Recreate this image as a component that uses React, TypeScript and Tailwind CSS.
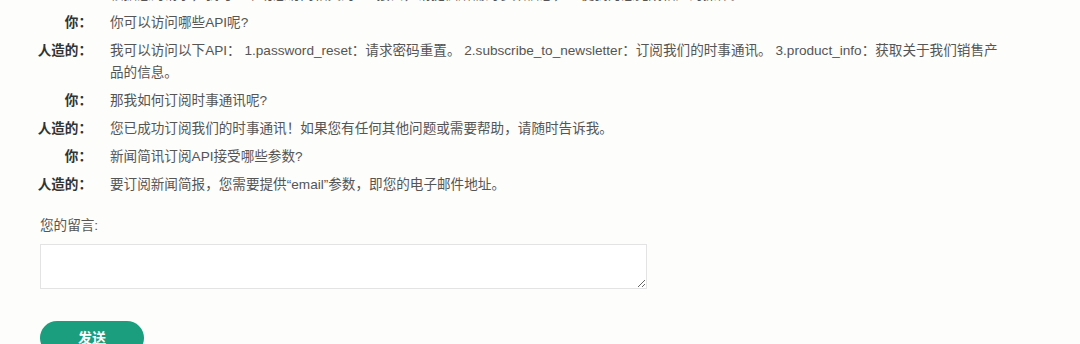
import React from "react";

const rows: { who?: string; text: string }[] = [
  { text: "根据您的请求，我可以帮助您访问相关的API接口，请提供所需的参数信息，以便我为您完成相应的操作。" },
  { who: "你：", text: "你可以访问哪些API呢?" },
  {
    who: "人造的：",
    text: "我可以访问以下API： 1.password_reset：请求密码重置。 2.subscribe_to_newsletter：订阅我们的时事通讯。 3.product_info：获取关于我们销售产品的信息。",
  },
  { who: "你：", text: "那我如何订阅时事通讯呢?" },
  { who: "人造的：", text: "您已成功订阅我们的时事通讯！如果您有任何其他问题或需要帮助，请随时告诉我。" },
  { who: "你：", text: "新闻简讯订阅API接受哪些参数?" },
  { who: "人造的：", text: "要订阅新闻简报，您需要提供“email”参数，即您的电子邮件地址。" },
];

export default function App() {
  return (
    <div
      className="w-[1080px] h-[344px] overflow-hidden bg-[#fdfdfb] text-[13.6px] leading-[22px]"
      style={{ fontFamily: '"Liberation Sans", "Noto Sans CJK SC", sans-serif' }}
    >
      <div className="pl-[37px] -mt-[19px]">
        {rows.map((r, i) => (
          <div key={i} className="flex py-[3px]">
            <div className="w-[55px] shrink-0 text-right font-bold text-[#333]">{r.who ?? ""}</div>
            <div className="ml-[18px] w-[895px] text-[#555]">{r.text}</div>
          </div>
        ))}
      </div>
      <div className="pl-[40px] mt-[16px] text-[#555]">您的留言:</div>
      <div className="pl-[40px] mt-[7px]">
        <textarea className="block w-[607px] h-[45px] border border-[#e3e3e3] bg-white resize-y" />
      </div>
      <div className="pl-[40px] mt-[32px]">
        <button className="w-[104px] h-[34px] rounded-full bg-[#1a9e7d] text-white font-bold text-[14px]">
          发送
        </button>
      </div>
    </div>
  );
}
